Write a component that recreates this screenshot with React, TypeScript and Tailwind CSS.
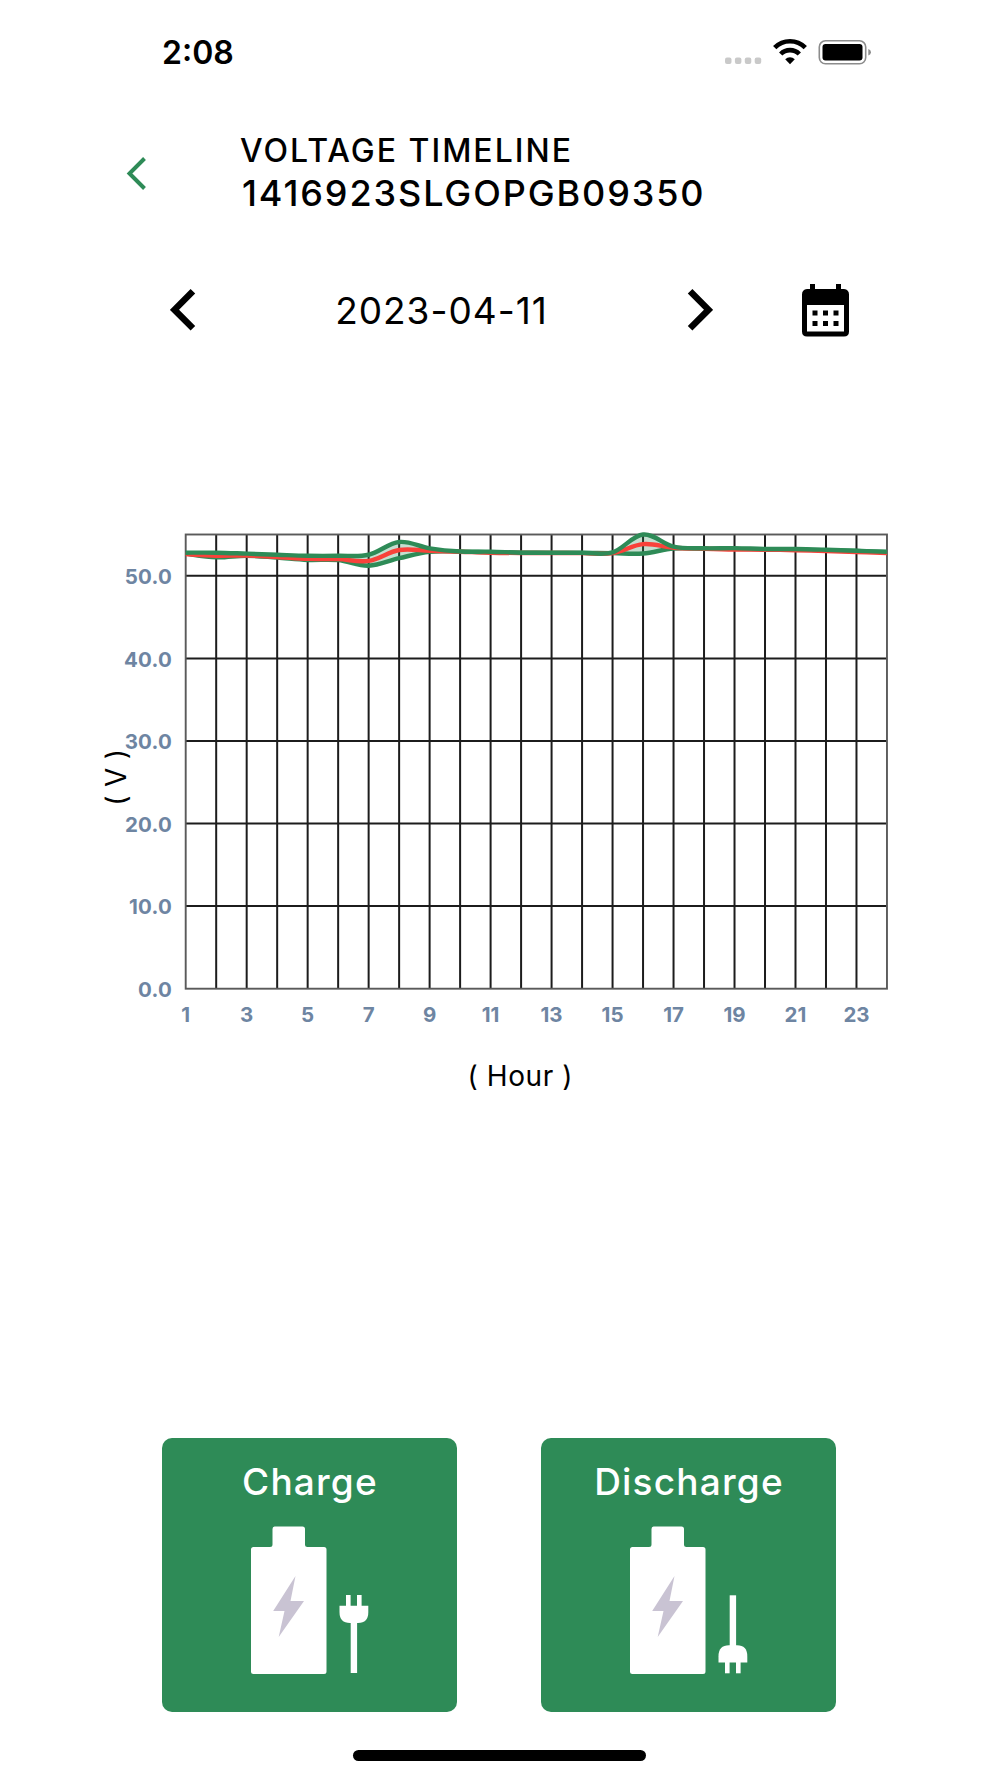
import { useState } from "react";

const GREEN = "#2e8b57";

// one value per hour, starting at hour 1
const maxVolts = [52.8, 52.8, 52.68, 52.55, 52.43, 52.43, 52.55, 54.1, 53.33, 52.95, 52.92, 52.8, 52.8, 52.8, 52.84, 55, 53.53, 53.33, 53.35, 53.25, 53.24, 53.15, 53.03, 52.92];
const avgVolts = [52.62, 52.43, 52.45, 52.27, 52.05, 52.02, 51.8, 53.12, 53.03, 52.92, 52.8, 52.76, 52.76, 52.75, 52.74, 53.83, 53.4, 53.27, 53.18, 53.16, 53.1, 53, 52.88, 52.74];
const minVolts = [52.68, 52.23, 52.43, 52.2, 51.92, 51.9, 51.22, 52.13, 52.9, 52.93, 52.85, 52.8, 52.78, 52.78, 52.74, 52.7, 53.31, 53.28, 53.26, 53.2, 53.18, 53.1, 53, 52.85];

const LEFT = 95.7;
const TOP = 14.5;
const BOTTOM = 468.7;
const STEP = 30.49;

const px = (i: number) => LEFT + i * STEP;
const py = (v: number) => BOTTOM - v * 8.258;

function curve(values: number[]) {
  const pts = values.map((v, i) => [px(i), py(v)]);
  let d = "";
  for (let i = 0; i < pts.length - 1; i++) {
    const prev = pts[i - 1] ?? pts[i];
    const cur = pts[i];
    const next = pts[i + 1];
    const after = pts[i + 2] ?? next;
    const k = 0.175;
    d += ` C ${cur[0] + (next[0] - prev[0]) * k} ${cur[1] + (next[1] - prev[1]) * k} ${next[0] - (after[0] - cur[0]) * k} ${next[1] - (after[1] - cur[1]) * k} ${next[0]} ${next[1]}`;
  }
  return { start: `${pts[0][0]} ${pts[0][1]}`, d };
}

function StatusBar() {
  return (
    <div className="flex h-[105px] items-start justify-between pl-[162px] pr-[128px] pt-8 text-black">
      <span className="pt-px text-[32px] font-semibold leading-10">2:08</span>
      <svg width="148" height="34" viewBox="0 0 148 34" className="mt-1">
        {[0, 1, 2, 3].map((i) => (
          <rect key={i} x={1 + i * 9.9} y="21.5" width="6.5" height="6.5" rx="2" fill="#c9c9c9" />
        ))}
        <g fill="none" stroke="#000" strokeWidth="4.6">
          <path d="M50.7 11.6 A21.5 21.5 0 0 1 81.3 11.6" />
          <path d="M56.7 18 A13 13 0 0 1 75.3 18" />
        </g>
        <path d="M61.2 23.2 A7 7 0 0 1 70.8 23.2 L66 28.2 Z" fill="#000" />
        <rect x="95.3" y="4.8" width="46.4" height="23" rx="6.2" fill="none" stroke="#8c8c8c" strokeWidth="1.6" />
        <rect x="98.5" y="8" width="40" height="16.6" rx="3" fill="#000" />
        <path d="M144.3 13 Q147 13.8 147 16.2 Q147 18.6 144.3 19.4 Z" fill="#8c8c8c" />
      </svg>
    </div>
  );
}

function VoltageChart() {
  const max = curve(maxVolts);
  const avg = curve(avgVolts);
  const min = curve(minVolts);
  const minBack = [...minVolts].map((v, i) => `L ${px(i)} ${py(v)}`).reverse().join(" ");

  return (
    <svg width="820" height="590" viewBox="0 0 820 590" className="ml-[90px] shrink-0">
      <g stroke="#1c1c1c" strokeWidth="2">
        {Array.from({ length: 22 }, (_, i) => (
          <line key={i} x1={px(i + 1)} x2={px(i + 1)} y1={TOP} y2={BOTTOM} />
        ))}
        {[10, 20, 30, 40, 50].map((v) => (
          <line key={v} x1={LEFT} x2={px(23)} y1={py(v)} y2={py(v)} />
        ))}
      </g>
      <rect x={LEFT} y={TOP} width={STEP * 23} height={BOTTOM - TOP} fill="none" stroke="#5a5a5a" strokeWidth="1.9" />

      <path d={`M ${max.start} ${max.d} ${minBack} Z`} fill={GREEN} fillOpacity="0.28" />
      <g fill="none" strokeWidth="4.4">
        <path d={`M ${min.start} ${min.d}`} stroke={GREEN} />
        <path d={`M ${avg.start} ${avg.d}`} stroke="#f9423a" />
        <path d={`M ${max.start} ${max.d}`} stroke={GREEN} />
      </g>

      <g fill="#6e85a2" fontSize="20.5" fontWeight="700">
        {[0, 10, 20, 30, 40, 50].map((v) => (
          <text key={v} x="82" y={py(v) + 8.3} textAnchor="end" letterSpacing="0.2">{v.toFixed(1)}</text>
        ))}
        {Array.from({ length: 12 }, (_, i) => (
          <text key={i} x={px(i * 2)} y="502.3" textAnchor="middle">{i * 2 + 1}</text>
        ))}
      </g>
      <text x="430.3" y="565.8" textAnchor="middle" fontSize="28" letterSpacing="0.6">( Hour )</text>
      <text transform="translate(35.5 257.3) rotate(-90)" textAnchor="middle" fontSize="28" letterSpacing="0.3">( V )</text>
    </svg>
  );
}

function Plug() {
  return (
    <>
      <rect x="95" y="69" width="4.6" height="12" />
      <rect x="106" y="69" width="4.6" height="12" />
      <path d="M88.5 79.7 H117.3 V86 Q117.3 97 107 97 H99 Q88.5 97 88.5 86 Z" />
      <rect x="99.7" y="96" width="6.4" height="51" />
    </>
  );
}

function ModeCard({ label, discharge = false }: { label: string; discharge?: boolean }) {
  return (
    <button className="flex h-[274px] w-[295px] flex-col items-center rounded-[10px] bg-[#2e8b57] pt-5 text-white">
      <span className="pl-px text-[37px] font-medium leading-[48px] tracking-[1.2px]">{label}</span>
      <svg width="118" height="148" viewBox="0 0 118 148" fill="#fff" className="mt-5">
        <path d="M23.5 0.5 H51.5 Q54 0.5 54 3 V18.5 Q54 21 56.5 21 H73 Q75.5 21 75.5 23.5 V145.5 Q75.5 148 73 148 H2.5 Q0 148 0 145.5 V23.5 Q0 21 2.5 21 H19 Q21.5 21 21.5 18.5 V3 Q21.5 0.5 23.5 0.5 Z" />
        <path d="M44.5 50 L39.5 75 H53 L27.7 111 L33.5 85 H22.2 Z" fill="#c9c3d3" />
        {discharge ? <g transform="translate(0 216.3) scale(1 -1)"><Plug /></g> : <Plug />}
      </svg>
    </button>
  );
}

export default function App() {
  const [day, setDay] = useState(11);

  return (
    <div className="flex h-[1778px] w-[1000px] flex-col overflow-hidden bg-white font-['Inter',sans-serif] text-black">
      <StatusBar />

      <header className="flex h-[135px] items-start pl-[126px] pt-[23px]">
        <svg width="22" height="36" viewBox="0 0 22 36" className="mr-[92px] mt-[28px]">
          <path d="M18.5 2.5 L3.5 17.5 L18.5 32.5" fill="none" stroke={GREEN} strokeWidth="4" />
        </svg>
        <div className="flex flex-col whitespace-nowrap pt-px font-medium">
          <span className="text-[32px] leading-[43px] tracking-[2px]">VOLTAGE TIMELINE</span>
          <span className="pl-[2px] text-[36px] leading-[42px] tracking-[1.9px]">1416923SLGOPGB09350</span>
        </div>
      </header>

      <div className="flex h-[140px] shrink-0 items-center pl-[170px]">
        <button onClick={() => setDay(Math.max(1, day - 1))}>
          <svg width="26" height="42" viewBox="0 0 26 42">
            <path d="M22.9 2.3 L4.5 20.8 L22.9 39.3" fill="none" stroke="#000" strokeWidth="6.5" />
          </svg>
        </button>
        <span className="w-[491px] pt-0.5 text-center text-[37px] tracking-[1px]">2023-04-{String(day).padStart(2, "0")}</span>
        <button onClick={() => setDay(Math.min(30, day + 1))}>
          <svg width="26" height="42" viewBox="0 0 26 42">
            <path d="M3.1 2.3 L21.5 20.8 L3.1 39.3" fill="none" stroke="#000" strokeWidth="6.5" />
          </svg>
        </button>
        <svg width="47" height="53" viewBox="0 0 47 53" className="ml-[89px]">
          <path fillRule="evenodd" d="M8 0 H13 V5 H34 V0 H39 V5 H42 Q47 5.5 47 10.5 V47.5 Q47 52.5 42 52.5 H5 Q0 52.5 0 47.5 V10.5 Q0 5.5 5 5 H8 Z M5 21 V47.5 H42 V21 Z" />
          {[10.5, 21, 31.5].map((x) => (
            <g key={x}>
              <rect x={x} y="26.5" width="5" height="5" />
              <rect x={x} y="37" width="5" height="5" />
            </g>
          ))}
        </svg>
      </div>

      <div className="flex h-[1058px] shrink-0 flex-col pt-[140px]">
        <VoltageChart />
      </div>

      <div className="flex shrink-0 gap-[84px] pl-[162px]">
        <ModeCard label="Charge" />
        <ModeCard label="Discharge" discharge />
      </div>

      <div className="ml-[353px] mt-[38px] h-[11px] w-[293px] shrink-0 rounded-full bg-black" />
    </div>
  );
}
